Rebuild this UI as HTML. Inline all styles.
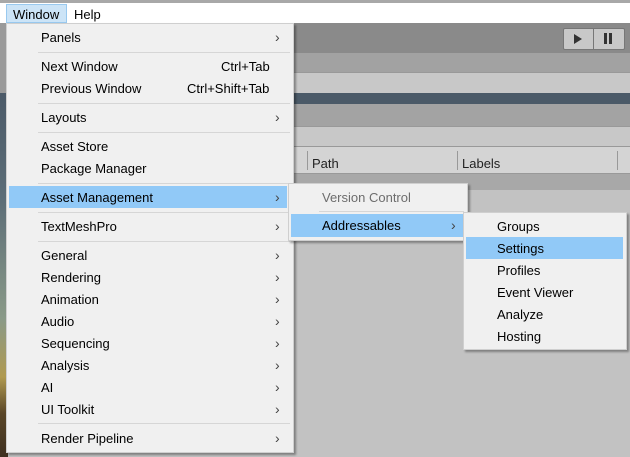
<!DOCTYPE html>
<html><head><style>
*{margin:0;padding:0;box-sizing:border-box}
body{width:630px;height:457px;overflow:hidden;position:relative;background:#c2c2c2;font-family:"Liberation Sans","Noto Sans CJK SC",sans-serif;font-size:13px;color:#000}
.abs{position:absolute}
.menu{position:absolute;background:#f0f0f0;border:1px solid #cfcfcf;box-shadow:2px 2px 2px rgba(0,0,0,0.35)}
.it{position:absolute;left:0;right:0;height:22px;line-height:23px}
.it span.t{position:absolute}
.arr{position:absolute;font-size:14px;color:#444}
.sep{position:absolute;height:1px;background:#d6d6d6}
.hl{background:#91c9f7}
</style></head><body>
<div class="abs" style="left:0;top:0;width:630px;height:3px;background:#a8a8a8"></div>
<div class="abs" style="left:0;top:3px;width:630px;height:20px;background:#fff"></div>
<div class="abs" style="left:6px;top:4px;width:61px;height:19px;background:#cce4f7;border:1px solid #99c9ef"></div>
<div class="abs" style="left:13px;top:6px;line-height:17px">Window</div>
<div class="abs" style="left:74px;top:6px;line-height:17px">Help</div>
<div class="abs" style="left:0;top:23px;width:630px;height:30px;background:#8a8a8a"></div>
<div class="abs" style="left:563px;top:28px;width:62px;height:22px;background:#c8c8c8;border:1px solid #777;border-radius:2px"></div>
<div class="abs" style="left:593px;top:29px;width:1px;height:20px;background:#777"></div>
<svg class="abs" style="left:572px;top:33px" width="12" height="12"><path d="M2 1L10 6L2 11Z" fill="#333"/></svg>
<div class="abs" style="left:604px;top:33px;width:3px;height:11px;background:#333"></div>
<div class="abs" style="left:609px;top:33px;width:3px;height:11px;background:#333"></div>
<div class="abs" style="left:0;top:53px;width:630px;height:19px;background:#a2a2a2"></div>
<div class="abs" style="left:0;top:72px;width:630px;height:21px;background:#c8c8c8;border-top:1px solid #999"></div>
<div class="abs" style="left:0;top:93px;width:630px;height:11px;background:#4b5a68"></div>
<div class="abs" style="left:0;top:104px;width:630px;height:22px;background:#a3a3a3"></div>
<div class="abs" style="left:0;top:126px;width:630px;height:20px;background:#c8c8c8;border-top:1px solid #999"></div>
<div class="abs" style="left:0;top:146px;width:630px;height:28px;background:#d4d4d4;border-top:1px solid #999;border-bottom:1px solid #999"></div>
<div class="abs" style="left:307px;top:151px;width:1px;height:19px;background:#999"></div>
<div class="abs" style="left:457px;top:151px;width:1px;height:19px;background:#999"></div>
<div class="abs" style="left:617px;top:151px;width:1px;height:19px;background:#999"></div>
<div class="abs" style="left:312px;top:156px;color:#222">Path</div>
<div class="abs" style="left:462px;top:156px;color:#222">Labels</div>
<div class="abs" style="left:0;top:174px;width:630px;height:16px;background:#a8a8a8"></div>
<div class="abs" style="left:0;top:93px;width:8px;height:364px;background:linear-gradient(#4b5a68 0%,#5d6e78 30%,#8a9a88 62%,#b09a50 78%,#5a4628 88%,#3e3020 100%)"></div>
<div class="abs" style="left:0;top:23px;width:8px;height:70px;background:#9a9a9a"></div>
<div class="menu" style="left:6px;top:23px;width:288px;height:430px">
<div class="it" style="top:2px"><span class="t" style="left:34px">Panels</span><span class="arr" style="left:268px">›</span></div>
<div class="sep" style="left:31px;right:3px;top:28px"></div>
<div class="it" style="top:31px"><span class="t" style="left:34px">Next Window</span><span class="t" style="left:214px">Ctrl+Tab</span></div>
<div class="it" style="top:53px"><span class="t" style="left:34px">Previous Window</span><span class="t" style="left:180px">Ctrl+Shift+Tab</span></div>
<div class="sep" style="left:31px;right:3px;top:79px"></div>
<div class="it" style="top:82px"><span class="t" style="left:34px">Layouts</span><span class="arr" style="left:268px">›</span></div>
<div class="sep" style="left:31px;right:3px;top:108px"></div>
<div class="it" style="top:111px"><span class="t" style="left:34px">Asset Store</span></div>
<div class="it" style="top:133px"><span class="t" style="left:34px">Package Manager</span></div>
<div class="sep" style="left:31px;right:3px;top:159px"></div>
<div class="it hl" style="top:162px;left:2px;right:6px"><span class="t" style="left:32px">Asset Management</span><span class="arr" style="left:266px">›</span></div>
<div class="sep" style="left:31px;right:3px;top:188px"></div>
<div class="it" style="top:191px"><span class="t" style="left:34px">TextMeshPro</span><span class="arr" style="left:268px">›</span></div>
<div class="sep" style="left:31px;right:3px;top:217px"></div>
<div class="it" style="top:220px"><span class="t" style="left:34px">General</span><span class="arr" style="left:268px">›</span></div>
<div class="it" style="top:242px"><span class="t" style="left:34px">Rendering</span><span class="arr" style="left:268px">›</span></div>
<div class="it" style="top:264px"><span class="t" style="left:34px">Animation</span><span class="arr" style="left:268px">›</span></div>
<div class="it" style="top:286px"><span class="t" style="left:34px">Audio</span><span class="arr" style="left:268px">›</span></div>
<div class="it" style="top:308px"><span class="t" style="left:34px">Sequencing</span><span class="arr" style="left:268px">›</span></div>
<div class="it" style="top:330px"><span class="t" style="left:34px">Analysis</span><span class="arr" style="left:268px">›</span></div>
<div class="it" style="top:352px"><span class="t" style="left:34px">AI</span><span class="arr" style="left:268px">›</span></div>
<div class="it" style="top:374px"><span class="t" style="left:34px">UI Toolkit</span><span class="arr" style="left:268px">›</span></div>
<div class="sep" style="left:31px;right:3px;top:399px"></div>
<div class="it" style="top:403px"><span class="t" style="left:34px">Render Pipeline</span><span class="arr" style="left:268px">›</span></div>
</div>
<div class="menu" style="left:288px;top:183px;width:180px;height:58px">
<div class="it" style="top:2px"><span class="t" style="left:33px;color:#6d6d6d">Version Control</span></div>
<div class="sep" style="left:30px;right:3px;top:27px"></div>
<div class="it hl" style="top:30px;left:2px;right:2px;height:23px"><span class="t" style="left:31px">Addressables</span><span class="arr" style="left:160px">›</span></div>
</div>
<div class="menu" style="left:463px;top:212px;width:164px;height:138px">
<div class="it" style="top:2px"><span class="t" style="left:33px">Groups</span></div>
<div class="it hl" style="top:24px;left:2px;right:3px"><span class="t" style="left:31px">Settings</span></div>
<div class="it" style="top:46px"><span class="t" style="left:33px">Profiles</span></div>
<div class="it" style="top:68px"><span class="t" style="left:33px">Event Viewer</span></div>
<div class="it" style="top:90px"><span class="t" style="left:33px">Analyze</span></div>
<div class="it" style="top:112px"><span class="t" style="left:33px">Hosting</span></div>
</div>
</body></html>
